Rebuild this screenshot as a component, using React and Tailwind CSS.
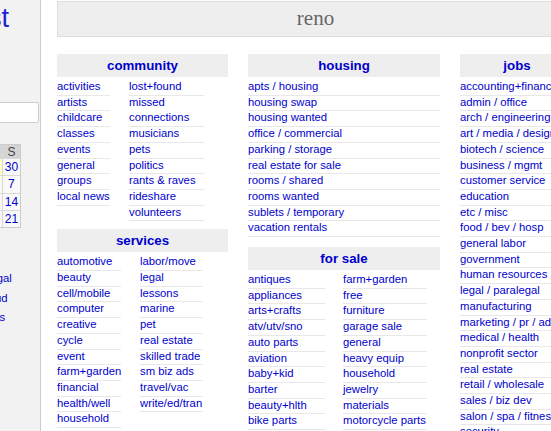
import React from "react";

const community1 = ["activities", "artists", "childcare", "classes", "events", "general", "groups", "local news"];
const community2 = ["lost+found", "missed connections", "musicians", "pets", "politics", "rants & raves", "rideshare", "volunteers"];
const services1 = ["automotive", "beauty", "cell/mobile", "computer", "creative", "cycle", "event", "farm+garden", "financial", "health/well", "household"];
const services2 = ["labor/move", "legal", "lessons", "marine", "pet", "real estate", "skilled trade", "sm biz ads", "travel/vac", "write/ed/tran"];
const housing = ["apts / housing", "housing swap", "housing wanted", "office / commercial", "parking / storage", "real estate for sale", "rooms / shared", "rooms wanted", "sublets / temporary", "vacation rentals"];
const forsale1 = ["antiques", "appliances", "arts+crafts", "atv/utv/sno", "auto parts", "aviation", "baby+kid", "barter", "beauty+hlth", "bike parts", "bikes", "boats", "books", "business"];
const forsale2 = ["farm+garden", "free", "furniture", "garage sale", "general", "heavy equip", "household", "jewelry", "materials", "motorcycle parts", "motorcycles", "music instr", "photo+video", "rvs+camp"];
const jobs = ["accounting+finance", "admin / office", "arch / engineering", "art / media / design", "biotech / science", "business / mgmt", "customer service", "education", "etc / misc", "food / bev / hosp", "general labor", "government", "human resources", "legal / paralegal", "manufacturing", "marketing / pr / advertising", "medical / health", "nonprofit sector", "real estate", "retail / wholesale", "sales / biz dev", "salon / spa / fitness", "security", "skilled trade / craft"];

const calRows = [
  [24, 25, 26, 27, 28, 29, 30],
  [1, 2, 3, 4, 5, 6, 7],
  [8, 9, 10, 11, 12, 13, 14],
  [15, 16, 17, 18, 19, 20, 21],
];

function List({ items, width, nowrap }) {
  return (
    <ul style={{ width }} className="shrink-0 pt-[2px]">
      {items.map((t) => (
        <li
          key={t}
          className={
            "leading-[15.7px] border-b border-[#e8e8e8] -mb-px text-[11.3px] text-[#00c]" +
            (nowrap ? " whitespace-nowrap" : "")
          }
        >
          {t}
        </li>
      ))}
    </ul>
  );
}

function Head({ children }) {
  return (
    <div className="h-[23px] bg-[#eee] flex items-center justify-center text-[13.3px] font-bold text-[#00c] pt-px">
      {children}
    </div>
  );
}

export default function App() {
  return (
    <div className="w-[551px] h-[431px] overflow-hidden bg-white font-['Liberation_Sans',Arial,sans-serif]">
      <div className="flex -ml-[127px] w-[800px]">
        <aside className="w-[168px] h-[431px] shrink-0 bg-[#f2f2f2] border-r border-[#ccc] flex flex-col items-center text-[11.3px] text-[#00c]">
          <div className="mt-[5px] text-[27px] leading-[27px] text-[#2222cc]">craigslist</div>
          <div className="mt-[14px] leading-[16px]">create a posting</div>
          <div className="leading-[16px]">my account</div>
          <div className="mt-[24px] w-[165px] h-[21px] bg-white border border-[#ccc] rounded-[2px]" />
          <div className="mt-[6px] leading-[15px] text-[#333]">event calendar</div>
          <div className="grid grid-cols-[repeat(7,17.3px)] gap-px bg-[#d8d8d8] border border-[#ccc] text-[12px]">
            {["S", "M", "T", "W", "T", "F", "S"].map((d, i) => (
              <div key={i} className="h-[13px] bg-[#d4d4d4] text-[#444] flex items-center justify-center leading-none">
                {d}
              </div>
            ))}
            {calRows.flat().map((n, i) => (
              <div
                key={i}
                className={
                  "h-[16.3px] flex items-center justify-center leading-none " +
                  (n === 29 ? "bg-[#ffffc8]" : "bg-[#f9f9f9]")
                }
              >
                {n}
              </div>
            ))}
          </div>
          <ul className="mt-[41px] flex flex-col items-center">
            <li className="leading-[19.5px] whitespace-nowrap">help, faq, abuse, legal</li>
            <li className="leading-[19.5px] whitespace-nowrap">avoid scams &amp; fraud</li>
            <li className="leading-[19.5px] whitespace-nowrap">personal safety tips</li>
          </ul>
        </aside>

        <main className="pl-[16px] pt-[1px]">
          <div className="w-[517px] h-[36px] bg-[#eee] border border-[#ddd] flex items-center justify-center font-['Liberation_Serif',Georgia,serif] text-[21px] text-[#666]">
            reno
          </div>
          <div className="flex gap-[20px] mt-[17px] items-start">
            <section className="w-[171px] shrink-0">
              <Head>community</Head>
              <div className="flex gap-[19px]">
                <List items={community1} width={53} />
                <List items={community2} width={75} />
              </div>
              <div className="mt-[9px]">
                <Head>services</Head>
                <div className="flex gap-[19px]">
                  <List items={services1} width={64} />
                  <List items={services2} width={63} />
                </div>
              </div>
            </section>
            <section className="w-[192px] shrink-0">
              <Head>housing</Head>
              <List items={housing} width={192} />
              <div className="mt-[11px]">
                <Head>for sale</Head>
                <div className="flex gap-[18px]">
                  <List items={forsale1} width={77} />
                  <List items={forsale2} width={84} />
                </div>
              </div>
            </section>
            <section className="w-[114px] shrink-0">
              <Head>jobs</Head>
              <List items={jobs} width={114} nowrap />
            </section>
          </div>
        </main>
      </div>
    </div>
  );
}
